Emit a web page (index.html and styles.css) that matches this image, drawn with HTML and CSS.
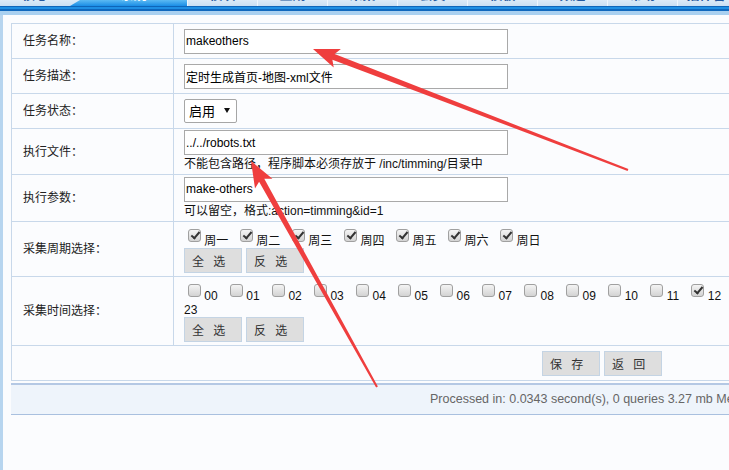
FILE: index.html
```html
<!DOCTYPE html>
<html lang="zh-CN">
<head>
<meta charset="utf-8">
<title>任务编辑</title>
<link rel="stylesheet" href="styles.css">
</head>
<body>
<div class="topbar">
  <div class="tabs">
    <div class="tab first"><span>核心</span></div>
    <div class="tab active"><span>系统</span></div>
    <div class="tab"><span>模块</span></div>
    <div class="tab"><span>生成</span></div>
    <div class="tab"><span>采集</span></div>
    <div class="tab"><span>会员</span></div>
    <div class="tab"><span>模板</span></div>
    <div class="tab"><span>频道</span></div>
    <div class="tab"><span>帮助</span></div>
    <div class="tab"><span>插件管理</span></div>
  </div>
  <div class="band"></div>
</div>
<div class="main">
  <table class="form">
    <colgroup><col class="c1"><col class="c2"></colgroup>
    <tr class="h35">
      <td class="lbl">任务名称：</td>
      <td><input class="txt" type="text" value="makeothers"></td>
    </tr>
    <tr class="h35">
      <td class="lbl">任务描述：</td>
      <td><input class="txt" type="text" value="定时生成首页-地图-xml文件"></td>
    </tr>
    <tr class="h35">
      <td class="lbl">任务状态：</td>
      <td><span class="sel"><select><option>启用</option><option>禁用</option></select></span></td>
    </tr>
    <tr class="h46">
      <td class="lbl">执行文件：</td>
      <td><input class="txt" type="text" value="../../robots.txt"><div class="hint">不能包含路径，程序脚本必须存放于 /inc/timming/目录中</div></td>
    </tr>
    <tr class="h47">
      <td class="lbl">执行参数：</td>
      <td><input class="txt" type="text" value="make-others"><div class="hint">可以留空，格式:action=timming&amp;id=1</div></td>
    </tr>
    <tr class="h55">
      <td class="lbl">采集周期选择：</td>
      <td class="checks">
        <div class="week">
          <label class="ck"><input type="checkbox" checked> 周一</label>
          <label class="ck"><input type="checkbox" checked> 周二</label>
          <label class="ck"><input type="checkbox" checked> 周三</label>
          <label class="ck"><input type="checkbox" checked> 周四</label>
          <label class="ck"><input type="checkbox" checked> 周五</label>
          <label class="ck"><input type="checkbox" checked> 周六</label>
          <label class="ck"><input type="checkbox" checked> 周日</label>
        </div>
        <div class="btns"><button class="btn">全 选</button><button class="btn">反 选</button></div>
      </td>
    </tr>
    <tr class="h69">
      <td class="lbl">采集时间选择：</td>
      <td class="checks">
        <div class="hours">
          <label class="hk"><input type="checkbox"> 00</label>
          <label class="hk"><input type="checkbox"> 01</label>
          <label class="hk"><input type="checkbox"> 02</label>
          <label class="hk"><input type="checkbox"> 03</label>
          <label class="hk"><input type="checkbox"> 04</label>
          <label class="hk"><input type="checkbox"> 05</label>
          <label class="hk"><input type="checkbox"> 06</label>
          <label class="hk"><input type="checkbox"> 07</label>
          <label class="hk"><input type="checkbox"> 08</label>
          <label class="hk"><input type="checkbox"> 09</label>
          <label class="hk"><input type="checkbox"> 10</label>
          <label class="hk"><input type="checkbox"> 11</label>
          <label class="hk"><input type="checkbox" checked> 12</label>
          <label class="hk"><input type="checkbox"> 13</label>
          <label class="hk"><input type="checkbox"> 14</label>
          <label class="hk"><input type="checkbox"> 15</label>
          <label class="hk"><input type="checkbox"> 16</label>
          <label class="hk"><input type="checkbox"> 17</label>
          <label class="hk"><input type="checkbox"> 18</label>
          <label class="hk"><input type="checkbox"> 19</label>
          <label class="hk"><input type="checkbox"> 20</label>
          <label class="hk"><input type="checkbox"> 21</label>
          <label class="hk"><input type="checkbox"> 22</label>
          <label class="hk"><input type="checkbox"> 23</label>
        </div>
        <div class="btns"><button class="btn">全 选</button><button class="btn">反 选</button></div>
      </td>
    </tr>
    <tr class="h35">
      <td colspan="2" class="actions"><div class="btns center"><button class="btn">保 存</button><button class="btn">返 回</button></div></td>
    </tr>
  </table>
  <div class="footer">Processed in: 0.0343 second(s), 0 queries 3.27 mb Memory Allocation</div>
</div>
<svg class="marks" width="729" height="470" viewBox="0 0 729 470">
  <polygon points="313,49 340.9,49 334.6,54.1 628.4,169.1 627.6,170.9 332.4,59.7 333.7,67.6"/>
  <polygon points="251,161 272.4,178.8 264.3,178.7 377.9,386.5 376.1,387.5 259.1,181.7 255,188.6"/>
</svg>
</body>
</html>
```

FILE: styles.css
```css
html { overflow: hidden; }
body {
  margin: 0;
  position: relative;
  background: #fbfcfe;
  font-family: "Liberation Sans", "Noto Sans CJK SC", sans-serif;
  font-size: 12px;
  line-height: 14px;
  color: #222;
}

/* top tab bar */
.tabs {
  display: flex;
  height: 6px;
  overflow: hidden;
  background: linear-gradient(#dcebf8, #c9dff3);
}
.tab {
  flex: none;
  width: 69px;
  border-left: 1px solid #eef6fd;
  font-weight: bold;
  font-size: 13px;
  color: #2459a0;
  text-align: center;
}
.tab span { display: block; line-height: 13px; margin-top: -12px; white-space: nowrap; }
.tab.first { width: 70px; border-left: 0; }
.tab.active {
  width: 117px;
  border-left: 0;
  padding-left: 10px;
  box-sizing: border-box;
  color: #fff;
  background: linear-gradient(#5cbaf3, #1a8de6);
  clip-path: polygon(10px 0, 100% 0, 100% 100%, 0 100%);
}
.band {
  height: 9px;
  background: linear-gradient(#0e66ba 0 1px, #1f8fe4 1px 3px, #1068bd 3px 5px, #a9d0f0 5px 9px);
}

/* main area */
.main {
  border-left: 3px solid #b7d5ef;
  padding: 8px 0 0 8px;
  height: 455px;
  box-sizing: border-box;
}
.form {
  border-collapse: collapse;
  table-layout: fixed;
  width: 1182px;
  background: #fbfcfe;
}
.form col.c1 { width: 162px; }
.form td {
  border: 1px solid #c8d8ea;
  padding: 0 10px;
  vertical-align: middle;
}
.form td.lbl { padding-left: 11px; color: #222; }
.h35 { height: 35px; }
.h46 { height: 46px; }
.h47 { height: 47px; }
.h55 { height: 55px; }
.h69 { height: 69px; }

.txt {
  display: block;
  box-sizing: border-box;
  width: 324px;
  height: 25px;
  margin: 0;
  padding: 0 1px;
  border: 1px solid #a9a9a9;
  background: #fff;
  font: 12px "Liberation Sans", "Noto Sans CJK SC", sans-serif;
  color: #000;
  outline: none;
}
.hint { line-height: 18px; color: #111; white-space: nowrap; }

.sel { position: relative; display: block; width: 53px; height: 24px; }
.sel select {
  appearance: none;
  -webkit-appearance: none;
  box-sizing: border-box;
  width: 53px;
  height: 24px;
  margin: 0;
  padding: 0 0 0 4px;
  border: 1px solid #a6a6a6;
  border-radius: 2px;
  background: #fff;
  font: 13px "Liberation Sans", "Noto Sans CJK SC", sans-serif;
  color: #000;
}
.sel::after {
  content: "";
  position: absolute;
  left: 40px;
  top: 9px;
  border-left: 3px solid transparent;
  border-right: 3px solid transparent;
  border-top: 5px solid #111;
}

.checks { padding-top: 3px; }
.week, .hours { color: #111; }
.hours { width: 990px; }
.ck { margin-right: 4.33px; }
.hk { margin-right: 5px; }
.ck input, .hk input {
  appearance: none;
  -webkit-appearance: none;
  position: relative;
  box-sizing: border-box;
  width: 13px;
  height: 13px;
  margin: 3px 0 3px 4px;
  border: 1px solid #a0a0a0;
  border-radius: 3px;
  background: linear-gradient(#f4f4f4, #d3d3d3);
  vertical-align: baseline;
}
.ck input:checked::after, .hk input:checked::after {
  content: "";
  position: absolute;
  left: 4px;
  top: 0px;
  width: 3px;
  height: 7px;
  border-right: 2px solid #333;
  border-bottom: 2px solid #333;
  transform: rotate(40deg);
}

.btns { display: flex; gap: 4px; }
.btns.center { justify-content: center; }
.btn {
  box-sizing: border-box;
  width: 58px;
  height: 25px;
  margin: 0;
  padding: 0 0 0 7px;
  text-align: left;
  border: 1px solid #c4d4e4;
  background: #dedede;
  font: 12px "Liberation Sans", "Noto Sans CJK SC", sans-serif;
  letter-spacing: 3px;
  color: #333;
}

.footer {
  margin-top: 2px;
  width: 1182px;
  box-sizing: border-box;
  height: 32px;
  line-height: 29px;
  padding-left: 419px;
  border-top: 2px solid #b4c8e4;
  border-bottom: 1px solid #a9c0df;
  background: #eef4fb;
  font-size: 12.5px;
  color: #666;
  white-space: nowrap;
}

.marks {
  position: absolute;
  left: 0;
  top: 0;
  pointer-events: none;
}
.marks polygon { fill: #ef3e3e; }
```
